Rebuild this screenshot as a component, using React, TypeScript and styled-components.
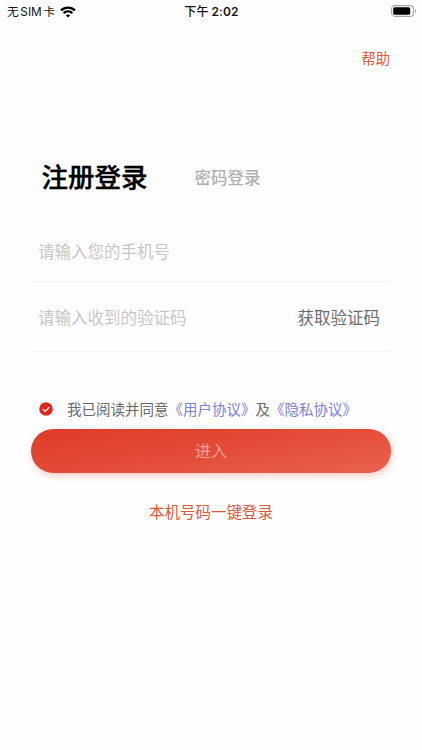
import React from 'react';
import styled, { createGlobalStyle } from 'styled-components';

const GlobalStyle = createGlobalStyle`
  * { box-sizing: border-box; }
  body { margin: 0; background: #fefefe; }
  button { font: inherit; border: 0; padding: 0; background: none; }
`;

const Screen = styled.main`
  width: 422px;
  height: 750px;
  overflow: hidden;
  display: flex;
  flex-direction: column;
  background: #fefefe;
  font-family: Inter, 'Noto Sans CJK SC', sans-serif;
  white-space: nowrap;
`;

const StatusBar = styled.header`
  height: 22px;
  padding: 0 5px 0 7px;
  display: grid;
  grid-template-columns: 1fr auto 1fr;
  align-items: center;
  line-height: 22px;
  color: #111;
`;

const Carrier = styled.div`
  display: flex;
  align-items: center;
  gap: 5px;
  font-size: 11.8px;
  svg { display: block; }
`;

const Word = styled.span`
  display: flex;
  gap: 1.5px;
  padding-top: 1px;
`;

const Clock = styled.div`
  display: flex;
  gap: 3px;
  margin-right: 1px;
  padding-top: 1px;
  font-size: 12px;
  font-weight: 600;
  letter-spacing: 0.1px;
`;

const ClockPeriod = styled.span`
  font-weight: 500;
`;

const BatterySlot = styled.div`
  display: flex;
  justify-content: flex-end;
  padding-bottom: 1px;
`;

const TopActions = styled.nav`
  display: flex;
  justify-content: flex-end;
  padding: 26px 32px 0 0;
`;

const TextLink = styled.button<{ $size: number }>`
  font-size: ${(p) => p.$size}px;
  line-height: 22px;
  color: #dc5a40;
`;

const Tabs = styled.div`
  display: flex;
  align-items: center;
  gap: 47px;
  height: 40px;
  margin: 87px 0 0 41.5px;
`;

const Tab = styled.button<{ $active?: boolean }>`
  padding-top: ${(p) => (p.$active ? 0 : 2)}px;
  font-size: ${(p) => (p.$active ? 26.5 : 16.5)}px;
  font-weight: 500;
  -webkit-text-stroke: ${(p) => (p.$active ? '0.4px #000' : '0')};
  color: ${(p) => (p.$active ? '#000' : '#b0b0b0')};
  line-height: 38px;
`;

const Form = styled.form`
  margin: 24px 31px 0;
  display: flex;
  flex-direction: column;
`;

const Field = styled.div<{ $height: number; $line: string }>`
  height: ${(p) => p.$height}px;
  padding: 0 11px 0 7px;
  display: flex;
  align-items: center;
  justify-content: space-between;
  border-bottom: 1px solid ${(p) => p.$line};
  font-size: 16.5px;
`;

const Placeholder = styled.span`
  color: #c6c7c9;
`;

const CodeButton = styled.button`
  color: #6c6c6c;
`;

const Consent = styled.div`
  display: flex;
  align-items: center;
  gap: 14px;
  height: 22px;
  margin: 46px 0 0 8px;
  font-size: 14.5px;
  line-height: 22px;
  color: #6a6a6a;
  svg { display: block; }
`;

const ConsentText = styled.span`
  padding-top: 2px;
`;

const Agreement = styled.span`
  color: #7b80dc;
`;

const Submit = styled.button`
  height: 44px;
  margin: 9px 0 0;
  border-radius: 22px;
  background: linear-gradient(171deg, #df3e2a 8%, #e34c39 50%, #e95f4c 94%);
  box-shadow: 1px 3px 7px rgba(235, 90, 70, 0.3);
  color: #f2a196;
  font-size: 16px;
  line-height: 44px;
`;

const QuickLogin = styled.div`
  display: flex;
  justify-content: center;
  margin-top: 29px;
`;

const WifiIcon = () => (
  <svg width="16" height="12" viewBox="0 0 16 12" fill="none" stroke="#000" strokeWidth="2.3">
    <path d="M1 4.4C4.9.6 11.1.6 15 4.4" />
    <path d="M3.6 7.1c2.5-2.3 6.3-2.3 8.8 0" />
    <path d="M8 11.6 5.8 9.3c1.2-1.1 3.2-1.1 4.4 0z" fill="#000" stroke="none" />
  </svg>
);

const BatteryIcon = () => (
  <svg width="26" height="12" viewBox="0 0 26 12">
    <rect x="0.6" y="0.6" width="21.8" height="10.8" rx="3.2" fill="#fff" stroke="#a6a6a6" strokeWidth="1.1" />
    <rect x="2.2" y="2.2" width="17" height="7.6" rx="1.6" fill="#000" />
    <path d="M24 4v4c1.5-.6 1.5-3.4 0-4z" fill="#a0a0a0" />
  </svg>
);

const CheckedIcon = () => (
  <svg width="14" height="14" viewBox="0 0 14 14">
    <circle cx="7" cy="7" r="6.8" fill="#d92a1d" />
    <path d="m3.8 7 2.4 2.4 4.2-4.3" fill="none" stroke="#fff" strokeWidth="1.2" />
  </svg>
);

export default function App() {
  return (
    <Screen>
      <GlobalStyle />
      <StatusBar>
        <Carrier>
          <Word><span>无</span><span>SIM</span><span>卡</span></Word>
          <WifiIcon />
        </Carrier>
        <Clock><ClockPeriod>下午</ClockPeriod><span>2:02</span></Clock>
        <BatterySlot><BatteryIcon /></BatterySlot>
      </StatusBar>
      <TopActions><TextLink $size={14.3}>帮助</TextLink></TopActions>
      <Tabs>
        <Tab $active>注册登录</Tab>
        <Tab>密码登录</Tab>
      </Tabs>
      <Form onSubmit={(e) => e.preventDefault()}>
        <Field $height={61} $line="#f0f0f0">
          <Placeholder>请输入您的手机号</Placeholder>
        </Field>
        <Field $height={70} $line="#f5f5f5">
          <Placeholder>请输入收到的验证码</Placeholder>
          <CodeButton type="button">获取验证码</CodeButton>
        </Field>
        <Consent>
          <CheckedIcon />
          <ConsentText>我已阅读并同意<Agreement>《用户协议》</Agreement>及<Agreement>《隐私协议》</Agreement></ConsentText>
        </Consent>
        <Submit type="submit">进入</Submit>
      </Form>
      <QuickLogin><TextLink $size={15.5}>本机号码一键登录</TextLink></QuickLogin>
    </Screen>
  );
}
